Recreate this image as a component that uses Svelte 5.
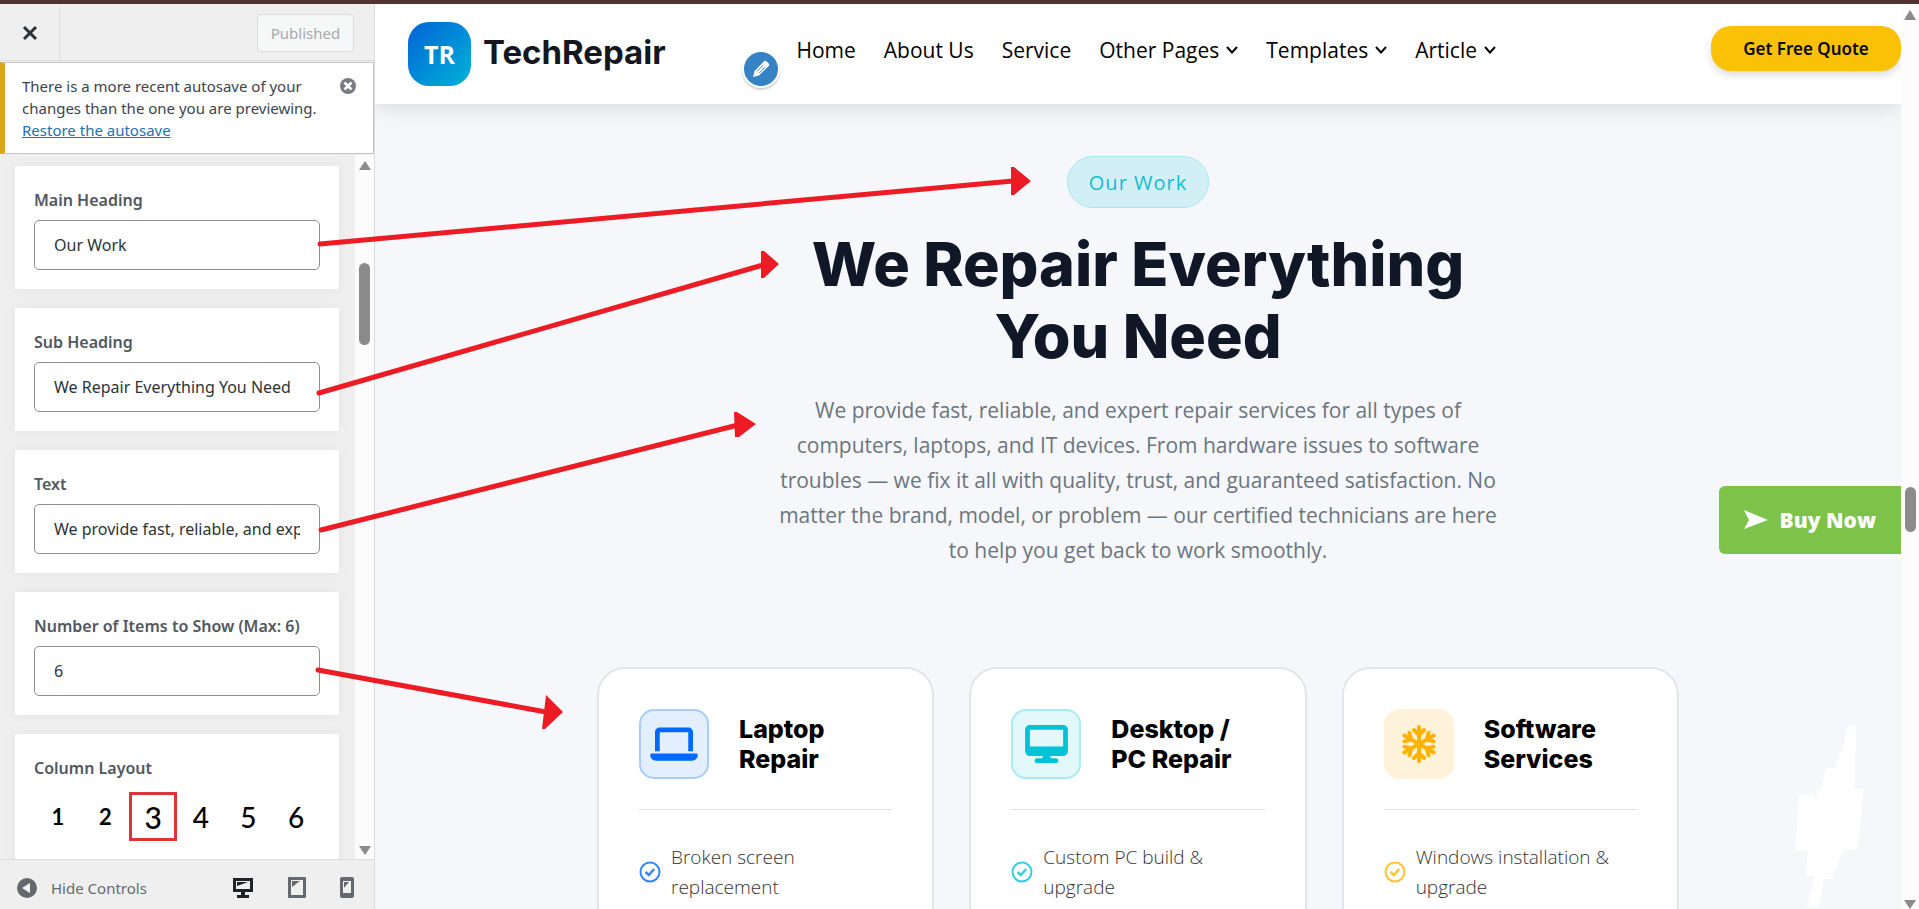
<script lang="ts">
  const intro =
    'We provide fast, reliable, and expert repair services for all types of computers, laptops, and IT devices. From hardware issues to software troubles — we fix it all with quality, trust, and guaranteed satisfaction. No matter the brand, model, or problem — our certified technicians are here to help you get back to work smoothly.';

  let heading = $state('Our Work');
  let subHeading = $state('We Repair Everything You Need');
  let text = $state(intro);
  let count = $state('6');
  let columns = $state(3);

  const nav = [
    { label: 'Home' },
    { label: 'About Us' },
    { label: 'Service' },
    { label: 'Other Pages', menu: true },
    { label: 'Templates', menu: true },
    { label: 'Article', menu: true },
  ];

  const services = [
    { kind: 'laptop', title: 'Laptop Repair', item: 'Broken screen replacement' },
    { kind: 'desktop', title: 'Desktop / PC Repair', item: 'Custom PC build & upgrade' },
    { kind: 'software', title: 'Software Services', item: 'Windows installation & upgrade' },
  ];
</script>

<div class="page">
  <aside class="customizer">
    <header class="cz-header">
      <button type="button" class="cz-close" aria-label="Close">
        <svg width="16" height="16" viewBox="0 0 16 16"><path d="M2 2l12 12M14 2L2 14" stroke="#2c3338" stroke-width="3" /></svg>
      </button>
      <button type="button" class="cz-save" disabled>Published</button>
    </header>

    <div class="notice">
      <p>There is a more recent autosave of your changes than the one you are previewing. <a href="#restore">Restore the autosave</a></p>
      <button type="button" class="dismiss" aria-label="Dismiss">
        <svg width="16" height="16" viewBox="0 0 16 16">
          <circle cx="8" cy="8" r="8" fill="#787c82" />
          <path d="M4.5 4.5l7 7M11.500 4.500l-7 7" stroke="#fff" stroke-width="2.600" />
        </svg>
      </button>
    </div>

    <div class="cz-body">
      <div class="controls">
        <div class="control">
          <label for="main-heading">Main Heading</label>
          <input id="main-heading" type="text" bind:value={heading} />
        </div>
        <div class="control">
          <label for="sub-heading">Sub Heading</label>
          <input id="sub-heading" type="text" bind:value={subHeading} />
        </div>
        <div class="control">
          <label for="body-text">Text</label>
          <input id="body-text" type="text" bind:value={text} />
        </div>
        <div class="control">
          <label for="item-count">Number of Items to Show (Max: 6)</label>
          <input id="item-count" type="text" inputmode="numeric" bind:value={count} />
        </div>
        <fieldset class="control">
          <legend>Column Layout</legend>
          <div class="columns">
            {#each [1, 2, 3, 4, 5, 6] as n}
              <label class="col" class:small={n < 3} class:selected={n === columns}>
                <input type="radio" name="columns" value={n} bind:group={columns} />
                <span>{n}</span>
              </label>
            {/each}
          </div>
        </fieldset>
      </div>
      <div class="scrollbar side-bar">
        <svg width="12" height="10" viewBox="0 0 12 10"><path d="M6 0L12 9H0z" /></svg>
        <i class="thumb"></i>
        <svg width="12" height="10" viewBox="0 0 12 10"><path d="M6 10L12 1H0z" /></svg>
      </div>
    </div>

    <footer class="cz-footer">
      <button type="button" class="hide">
        <svg width="20" height="20" viewBox="0 0 20 20">
          <circle cx="10" cy="10" r="10" fill="#646970" />
          <path d="M13 5v10L5 10z" fill="#f0f0f1" />
        </svg>
        Hide Controls
      </button>
      <div class="devices">
        <button type="button" aria-label="Desktop preview">
          <svg width="22" height="22" viewBox="0 0 22 22">
            <path d="M1 1h20v14h-8v3h4v3H5v-3h4v-3H1z" fill="#1d2327" />
            <path d="M4 4h14v8H4z" fill="#f0f0f1" />
            <path d="M5 5h11L5 9z" fill="#1d2327" />
          </svg>
        </button>
        <button type="button" aria-label="Tablet preview">
          <svg width="18" height="22" viewBox="0 0 18 22">
            <rect width="18" height="21" rx="1" fill="#646970" />
            <path d="M3 3h12v15H3z" fill="#f0f0f1" />
            <path d="M4 4h8L4 10z" fill="#646970" />
          </svg>
        </button>
        <button type="button" aria-label="Mobile preview">
          <svg width="14" height="22" viewBox="0 0 14 22">
            <rect width="14" height="21" rx="2" fill="#646970" />
            <path d="M3 4h8v12H3z" fill="#f0f0f1" />
            <path d="M4 5h5l-5 6z" fill="#646970" />
          </svg>
        </button>
      </div>
    </footer>
  </aside>

  <main class="preview">
    <header class="site-header">
      <a href="#home" class="logo">
        <span class="mark">TR</span>
        <span class="name">TechRepair</span>
      </a>
      <nav>
        <button type="button" class="edit" aria-label="Edit menu">
          <svg width="20" height="20" viewBox="0 0 20 20">
            <path d="M2 18l1.500-6L13 2.200c.8-.8 1.700-.6 2.400 0l2.300 2.300c.7.7.8 1.600 0 2.400L8 16.500z" fill="#fff" />
            <path d="M6 12.500l6-6.200M8 14.300l6-6.200" stroke="#3582c4" stroke-width="1" />
          </svg>
        </button>
        {#each nav as link}
          <a href="#nav">
            {link.label}
            {#if link.menu}
              <svg width="12" height="8" viewBox="0 0 12 8"><path d="M1 1l5 5.500L11 1" fill="none" stroke="#000" stroke-width="2" /></svg>
            {/if}
          </a>
        {/each}
      </nav>
      <button type="button" class="quote">Get Free Quote</button>
    </header>

    <section class="work">
      <svg class="bolt" width="68" height="186" viewBox="0 0 68 186">
        <path d="M53 2h8v16l-1 16v32h8l-1 20-4 36-3 5H49l-13 29h-7l-5 28H12l8-31h-9l2-25H0l4-56h15v4h3v-8h3l6-23h8v3l10-27z" fill="#fff" />
      </svg>
      <span class="pill">{heading}</span>
      <h1>{subHeading}</h1>
      <p class="intro">{text}</p>

      <div class="cards">
        {#each services as service}
          <article class="card {service.kind}">
            <div class="card-head">
              <div class="icon">
                {#if service.kind === 'laptop'}
                  <svg width="48" height="38" viewBox="0 0 640 512"><path fill="currentColor" d="M128 32C92.700 32 64 60.700 64 96v256h64V96h384v256h64V96c0-35.300-28.700-64-64-64H128zM19.200 384C8.600 384 0 392.600 0 403.200 0 445.600 34.400 480 76.800 480h486.400c42.400 0 76.800-34.400 76.800-76.800 0-10.600-8.600-19.200-19.200-19.200H19.200z" /></svg>
                {:else if service.kind === 'desktop'}
                  <svg width="43" height="38" viewBox="0 0 576 512"><path fill="currentColor" d="M64 0C28.700 0 0 28.700 0 64v288c0 35.300 28.700 64 64 64h176l-10.700 32H160c-17.700 0-32 14.300-32 32s14.300 32 32 32h256c17.700 0 32-14.300 32-32s-14.300-32-32-32h-69.300L336 416h176c35.300 0 64-28.700 64-64V64c0-35.300-28.700-64-64-64H64zM512 64v224H64V64h448z" /></svg>
                {:else}
                  <svg width="38" height="38" viewBox="0 0 38 38" fill="none" stroke="currentColor" stroke-width="4" stroke-linecap="round" stroke-linejoin="round">
                    {#each [0, 60, 120, 180, 240, 300] as turn}
                      <path transform="rotate({turn} 19 19)" d="M19 19V2M14 5l5 5 5-5" />
                    {/each}
                  </svg>
                {/if}
              </div>
              <h2>{service.title}</h2>
            </div>
            <ul>
              <li>
                <svg width="22" height="22" viewBox="0 0 22 22" fill="none" stroke="currentColor" stroke-width="2">
                  <circle cx="11" cy="11" r="9.500" />
                  <path d="M6.500 11l3.300 3 5.400-6" stroke-width="2.400" />
                </svg>
                <span>{service.item}</span>
              </li>
            </ul>
          </article>
        {/each}
      </div>
    </section>

    <a href="#buy" class="buy">
      <svg width="24" height="20" viewBox="0 0 24 20"><path d="M0 0l24 10L0 19l5-9z" fill="#fff" /></svg>
      Buy Now
    </a>
  </main>

  <div class="scrollbar page-bar">
    <svg width="12" height="10" viewBox="0 0 12 10"><path d="M6 0L12 10H0z" /></svg>
    <i class="thumb"></i>
    <svg width="12" height="10" viewBox="0 0 12 10"><path d="M6 10L12 1H0z" /></svg>
  </div>

  <!-- callouts from each control to the part it changes -->
  <svg class="callouts" width="1040" height="740" viewBox="0 0 1040 740">
    <g stroke="#ed1c24" stroke-width="5" stroke-linecap="round">
      <path d="M320 244L1013 181M319 393L763 265M321 530L738 425M318 670L546 712" />
    </g>
    <g fill="#ed1c24">
      <path d="M1011 167h3l17 14-17 14h-3zM761 251h3l15 13-15 14h-3zM734 412h3l19 12-17 13h-4zM546 695l17 17-18 17h-3z" />
    </g>
  </svg>
</div>

<style>
  :global(body) {
    margin: 0;
  }
  .page {
    position: relative;
    display: flex;
    box-sizing: border-box;
    height: 100vh;
    overflow: hidden;
    border-top: 4px solid #533331;
    background: #f5f7fb;
    font-family: 'Open Sans', 'Noto Sans', sans-serif;
  }
  .page *,
  .page *::before {
    box-sizing: border-box;
  }
  button,
  input {
    font-family: inherit;
  }
  button {
    padding: 0;
    border: 0;
    background: none;
  }
  svg {
    display: block;
    flex: none;
  }

  /* customizer */
  .customizer {
    display: flex;
    flex-direction: column;
    flex: none;
    width: 375px;
    border-right: 1px solid #dcdcde;
    background: #efefef;
    font-family: 'Noto Sans', sans-serif;
  }
  .cz-header {
    display: flex;
    align-items: center;
    justify-content: space-between;
    flex: none;
    height: 57px;
    padding: 2px 20px 0 0;
    border-bottom: 1px solid #dcdcde;
  }
  .cz-close {
    display: grid;
    place-items: center;
    align-self: stretch;
    width: 60px;
    border-right: 1px solid #dcdcde;
  }
  .cz-save {
    height: 38px;
    width: 97px;
    border: 1px solid #dcdcde;
    border-radius: 4px;
    background: #f6f7f7;
    color: #a7aaad;
    font-size: 15px;
  }
  .notice {
    display: flex;
    align-items: flex-start;
    justify-content: space-between;
    flex: none;
    margin-top: 1px;
    height: 92px;
    padding: 12px 17px 0 17px;
    border: 1px solid #c3c4c7;
    border-left: 5px solid #dba617;
    background: #fff;
  }
  .notice p {
    flex: none;
    width: 308px;
    margin: 0;
    color: #3c434a;
    font-size: 15px;
    line-height: 22px;
  }
  .notice a {
    color: #2271b1;
  }
  .dismiss {
    margin-top: 3px;
  }
  .cz-body {
    display: flex;
    flex: 1;
    min-height: 0;
    overflow: hidden;
    margin-top: 1px;
  }
  .controls {
    display: flex;
    flex-direction: column;
    flex: 1;
    gap: 19px;
    padding: 11px 16px 0 15px;
  }
  .control {
    display: flex;
    flex-direction: column;
    flex: none;
    margin: 0;
    padding: 19px;
    border: 0;
    background: #fff;
    box-shadow: 0 0 12px rgba(0, 0, 0, 0.05);
  }
  fieldset.control {
    padding-bottom: 40px;
  }
  .control > label,
  legend {
    float: left;
    margin-bottom: 4px;
    padding: 0;
    color: #50575e;
    font-size: 16px;
    font-weight: 600;
    line-height: 31px;
    white-space: nowrap;
  }
  .control > input {
    width: 100%;
    height: 50px;
    padding: 0 19px;
    border: 1px solid #8c8f94;
    border-radius: 5px;
    background: #fff;
    color: #2c3338;
    font-size: 16px;
  }
  .columns {
    display: grid;
    grid-template-columns: repeat(6, 1fr);
    clear: both;
    width: 100%;
    padding-top: 4px;
  }
  .col {
    display: grid;
    place-items: center;
    height: 49px;
    color: #000;
    font-family: Lato, sans-serif;
    font-size: 28px;
    font-weight: 500;
  }
  .col.small {
    font-size: 22px;
    font-weight: 700;
  }
  .col.selected {
    border: 3px solid #dd3535;
    font-size: 30px;
  }
  .col input {
    position: absolute;
    opacity: 0;
  }
  .cz-footer {
    display: flex;
    align-items: center;
    justify-content: space-between;
    flex: none;
    height: 50px;
    padding: 6px 20px 0 17px;
    border-top: 1px solid #dcdcde;
  }
  .hide {
    display: flex;
    align-items: center;
    gap: 14px;
    color: #646970;
    font-size: 15px;
  }
  .devices {
    display: flex;
    gap: 34px;
  }

  /* scrollbars */
  .scrollbar {
    display: flex;
    flex-direction: column;
    align-items: center;
    justify-content: space-between;
    flex: none;
    background: #fcfcfc;
    fill: #8b8b8b;
  }
  .thumb {
    width: 11px;
    border-radius: 6px;
    background: #8b8b8b;
  }
  .side-bar {
    width: 19px;
    padding: 6px 0 4px;
  }
  .side-bar .thumb {
    height: 82px;
    margin-bottom: 408px;
  }
  .page-bar {
    width: 18px;
    padding-top: 6px;
  }
  .page-bar .thumb {
    height: 45px;
    margin-top: 100px;
  }

  /* site preview */
  .preview {
    position: relative;
    display: flex;
    flex-direction: column;
    flex: 1;
    min-width: 0;
    overflow: hidden;
  }
  .site-header {
    display: flex;
    align-items: center;
    flex: none;
    height: 100px;
    padding-left: 33px;
    background: #fff;
    box-shadow: 0 4px 20px rgba(0, 0, 0, 0.12);
  }
  .logo {
    display: flex;
    align-items: center;
    gap: 12px;
    text-decoration: none;
  }
  .mark {
    display: grid;
    place-items: center;
    width: 63px;
    height: 64px;
    border-radius: 21px;
    background: linear-gradient(135deg, #0062d6, #00b4d8);
    color: #fff;
    font-size: 25px;
    font-weight: 700;
  }
  .name {
    padding-bottom: 4px;
    color: #14171f;
    font-family: Inter, sans-serif;
    font-size: 33px;
    font-weight: 700;
  }
  nav {
    position: relative;
    display: flex;
    gap: 28px;
    margin-left: auto;
    margin-right: 215px;
    padding-bottom: 9px;
  }
  nav a {
    display: flex;
    align-items: center;
    gap: 7px;
    color: #000;
    font-size: 21px;
    text-decoration: none;
    white-space: nowrap;
  }
  .edit {
    position: absolute;
    top: 14px;
    left: -54px;
    display: grid;
    place-items: center;
    width: 38px;
    height: 38px;
    border: 2px solid #fff;
    border-radius: 50%;
    background: #3582c4;
    box-shadow: 0 2px 2px rgba(60, 67, 74, 0.25);
  }
  .quote {
    width: 190px;
    height: 45px;
    margin-bottom: 11px;
    border-radius: 20px;
    background: #fbc106;
    box-shadow: 0 4px 8px rgba(0, 0, 0, 0.14);
    color: #0a0a0a;
    font-family: 'Noto Sans', sans-serif;
    font-size: 17px;
    font-weight: 600;
  }
  .work {
    position: relative;
    display: flex;
    flex-direction: column;
    align-items: center;
    padding-top: 52px;
  }
  .bolt {
    position: absolute;
    right: 38px;
    top: 619px;
  }
  .pill {
    display: grid;
    place-items: center;
    height: 52px;
    padding: 0 21px;
    border: 1px solid #a9e6ef;
    border-radius: 26px;
    background: #d2eff5;
    color: #12bcd1;
    font-size: 20px;
    letter-spacing: 1px;
  }
  h1 {
    width: 740px;
    margin: 20px 0 0;
    color: #101828;
    font-family: Inter, sans-serif;
    font-size: 61px;
    font-weight: 800;
    line-height: 72px;
    text-align: center;
  }
  .intro {
    width: 740px;
    margin: 21px 0 0;
    color: #6c757d;
    font-size: 21px;
    line-height: 35px;
    text-align: center;
  }
  .cards {
    display: grid;
    grid-template-columns: repeat(3, 1fr);
    gap: 35px;
    width: 100%;
    max-width: 1082px;
    margin-top: 99px;
  }
  .card {
    padding: 40px;
    border: 2px solid #e1e4e9;
    border-radius: 28px;
    background: #fff;
  }
  .card-head {
    display: flex;
    align-items: center;
    gap: 30px;
    padding-bottom: 30px;
    border-bottom: 1px solid #dee2e6;
  }
  .icon {
    display: grid;
    place-items: center;
    flex: none;
    width: 70px;
    height: 70px;
    border: 2px solid;
    border-radius: 15px;
  }
  h2 {
    margin: 0;
    color: #000;
    font-family: Inter, sans-serif;
    font-size: 25px;
    font-weight: 800;
    line-height: 30px;
  }
  ul {
    margin: 0;
    padding: 32px 0 40px;
    list-style: none;
  }
  li {
    display: flex;
    align-items: center;
    gap: 10px;
    color: #333;
    font-size: 19px;
    font-weight: 300;
    line-height: 30px;
  }
  .laptop .icon {
    border-color: #a8ccff;
    background: #e3efff;
    color: #0069ff;
  }
  .laptop li svg {
    color: #3385ff;
  }
  .desktop .icon {
    border-color: #a8ebf0;
    background: #e3f8fb;
    color: #00c2d7;
  }
  .desktop li svg {
    color: #33cedf;
  }
  .software .icon {
    border-color: #fff2da;
    background: #fff2da;
    color: #ffb300;
  }
  .software li svg {
    color: #ffc233;
  }
  .buy {
    position: absolute;
    right: 0;
    top: 482px;
    display: flex;
    align-items: center;
    gap: 12px;
    height: 68px;
    padding: 0 25px;
    border-radius: 6px 0 0 6px;
    background: #7dc249;
    color: #fff;
    font-size: 21px;
    font-weight: 800;
    text-decoration: none;
  }
  .callouts {
    position: absolute;
    left: 0;
    top: -4px;
    pointer-events: none;
  }
</style>
